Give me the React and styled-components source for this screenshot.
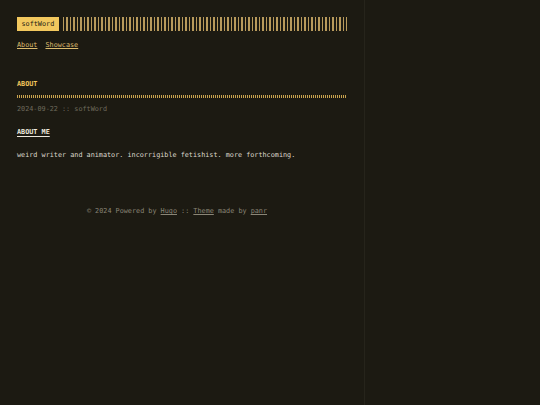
import styled, { createGlobalStyle } from "styled-components";

const GlobalStyle = createGlobalStyle`
  html, body {
    margin: 0;
    padding: 0;
    background: #1c1a12;
  }
  body {
    font-family: "DejaVu Sans Mono", "Liberation Mono", monospace;
    font-size: 6.8px;
    line-height: 10px;
    color: #dcd8cc;
  }
  a {
    color: inherit;
  }
`;

const PAGE = styled.div`
  display: flex;
  min-height: 405px;
  background: #1c1a12;
`;

const CONTAINER = styled.div`
  width: 330px;
  padding: 17px 17px 0 17px;
  border-right: 1px solid #26241b;
  display: flex;
  flex-direction: column;
`;

const HEADER = styled.header`
  display: flex;
  flex-direction: column;
`;

const LOGOROW = styled.div`
  display: flex;
  align-items: stretch;
  height: 14px;
  gap: 4px;
`;

const LOGO = styled.div`
  background: #f2c85e;
  color: #1c1a12;
  padding: 0 4.5px;
  display: flex;
  align-items: center;
`;

const LINES = styled.div`
  width: 286px;
  background: repeating-linear-gradient(
    90deg,
    #b89a5c,
    #b89a5c 1.5px,
    transparent 1.5px,
    transparent 3.5px
  );
`;

const MENU = styled.nav`
  display: flex;
  gap: 8px;
  margin-top: 9px;
`;

const MENULINK = styled.a`
  color: #dcbb6e;
  text-decoration: underline;
  text-underline-offset: 1px;
`;

const POST = styled.article`
  margin-top: 29px;
  width: 330px;
`;

const TITLE = styled.h1`
  margin: 0;
  font-size: 6.8px;
  line-height: 10px;
  font-weight: bold;
  color: #f2c55c;
`;

const DOTS = styled.div`
  margin-top: 6px;
  height: 3px;
  background:
    repeating-linear-gradient(90deg, #c8a24e, #c8a24e 1px, transparent 1px, transparent 2px);
`;

const META = styled.div`
  margin-top: 6px;
  color: #6f6b5d;
`;

const SUBTITLE = styled.h2`
  margin: 13px 0 0 0;
  font-size: 6.8px;
  line-height: 10px;
  font-weight: bold;
  color: #ece8dc;
  text-decoration: underline;
  text-decoration-thickness: 1px;
  text-underline-offset: 2px;
`;

const TEXT = styled.p`
  margin: 13px 0 0 0;
`;

const FOOTER = styled.footer`
  margin-top: 46px;
  width: 320px;
  text-align: center;
  color: #8a8576;
`;

function App() {
  return (
    <>
      <GlobalStyle />
      <PAGE>
        <CONTAINER>
          <HEADER>
            <LOGOROW>
              <LOGO>softWord</LOGO>
              <LINES />
            </LOGOROW>
            <MENU>
              <MENULINK href="#">About</MENULINK>
              <MENULINK href="#">Showcase</MENULINK>
            </MENU>
          </HEADER>
          <POST>
            <TITLE>ABOUT</TITLE>
            <DOTS />
            <META>2024-09-22 :: softWord</META>
            <SUBTITLE>ABOUT ME</SUBTITLE>
            <TEXT>weird writer and animator. incorrigible fetishist. more forthcoming.</TEXT>
          </POST>
          <FOOTER>
            © 2024 Powered by <a href="#">Hugo</a> :: <a href="#">Theme</a> made by <a href="#">panr</a>
          </FOOTER>
        </CONTAINER>
      </PAGE>
    </>
  );
}

export default App;
